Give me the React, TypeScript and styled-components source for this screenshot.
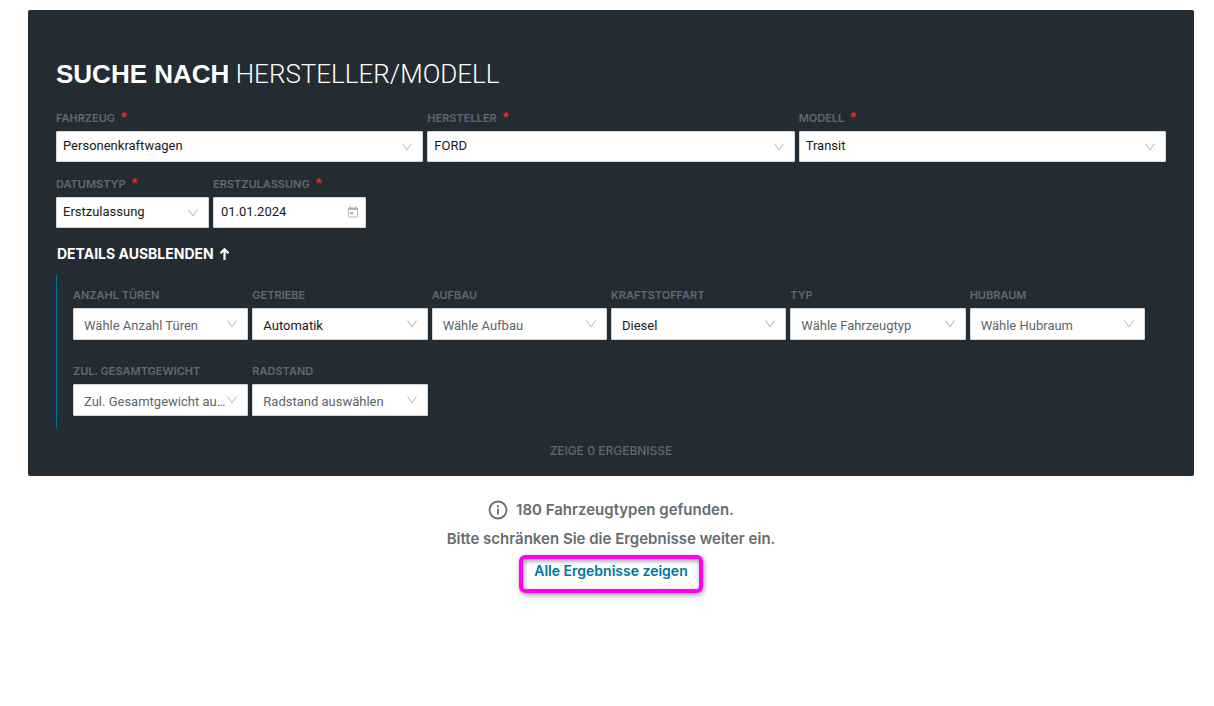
import React, { useId } from 'react';
import styled, { createGlobalStyle } from 'styled-components';

const GlobalStyle = createGlobalStyle`
  *, *::before, *::after { box-sizing: border-box; }
  body {
    margin: 0;
    background: #ffffff;
    font-family: Inter, "Liberation Sans", sans-serif;
    font-size: 13px;
    color: #1c2228;
  }
  button, input, select { font: inherit; margin: 0; }
`;

const Page = styled.main`
  padding: 10px 20px 24px 28px;
`;

const Panel = styled.form`
  background: #242c33;
  border-radius: 2px;
  padding: 44px 28px 15px;
`;

const Title = styled.h1`
  margin: 0 0 16px;
  font-family: Roboto, "Liberation Sans", sans-serif;
  font-size: 26px;
  line-height: 40px;
  font-weight: 300;
  color: #ffffff;
  text-transform: uppercase;
`;

const Strong = styled.strong`
  font-family: "Liberation Sans", Arial, sans-serif;
  font-weight: 700;
`;

const FieldRow = styled.div`
  display: grid;
  grid-template-columns: repeat(3, minmax(0, 1fr));
  gap: 4px;
  margin-bottom: 14px;
`;

const DateRow = styled.div`
  display: grid;
  grid-template-columns: repeat(2, 153px);
  gap: 4px;
`;

const FieldBox = styled.div`
  display: flex;
  flex-direction: column;
  min-width: 0;
`;

const Label = styled.label`
  margin-bottom: 5px;
  font-size: 11px;
  line-height: 16px;
  font-weight: 600;
  color: #5f696d;
  text-transform: uppercase;
  white-space: nowrap;
`;

const Required = styled.span`
  margin-left: 6px;
  font-family: "Liberation Sans", Arial, sans-serif;
  font-size: 15px;
  line-height: 12px;
  color: #d8302a;
`;

const Control = styled.div`
  position: relative;
  display: flex;
`;

const Select = styled.select<{ $roomy?: boolean; $muted?: boolean }>`
  appearance: none;
  width: 100%;
  height: ${(p) => (p.$roomy ? '32px' : '31px')};
  padding: ${(p) => (p.$roomy ? '2px 20px 0 10px' : '0 20px 2px 6px')};
  border: 1px solid #d5d8da;
  border-radius: 1px;
  background: #ffffff;
  font-family: Roboto, "Liberation Sans", sans-serif;
  color: ${(p) => (p.$muted ? '#5c6468' : '#15191d')};
  text-overflow: ellipsis;
  white-space: nowrap;
  overflow: hidden;
`;

const DateInput = styled.input`
  width: 100%;
  height: 31px;
  padding: 0 24px 2px 7px;
  border: 1px solid #d5d8da;
  border-radius: 1px;
  background: #ffffff;
  font-family: Roboto, "Liberation Sans", sans-serif;
  color: #15191d;
`;

const ControlIcon = styled.svg`
  position: absolute;
  right: 8px;
  top: 50%;
  width: 16px;
  height: 16px;
  margin-top: -8px;
  pointer-events: none;
`;

const DateIcon = styled(ControlIcon)`
  right: 5px;
`;

const Toggle = styled.button`
  display: flex;
  align-items: center;
  gap: 5px;
  margin: 16px 0 11px;
  padding: 0 1px;
  border: 0;
  background: none;
  font-size: 14px;
  line-height: 20px;
  font-weight: 700;
  color: #ffffff;
  text-transform: uppercase;
  cursor: pointer;
`;

const Details = styled.div`
  display: grid;
  grid-template-columns: repeat(6, minmax(0, 1fr));
  gap: 23px 4px;
  padding: 12px 21px 12px 16px;
  border-left: 1px solid #00739f;
`;

const Count = styled.p`
  margin: 13px 0 0;
  font-size: 12px;
  line-height: 20px;
  font-weight: 500;
  text-align: center;
  color: #5f696d;
  text-transform: uppercase;
`;

const Notice = styled.section`
  display: flex;
  flex-direction: column;
  align-items: center;
  padding-top: 19px;
  font-size: 15px;
  font-weight: 600;
  color: #666c70;
`;

const NoticeLine = styled.p`
  display: flex;
  align-items: center;
  gap: 8px;
  margin: 0;
  line-height: 29px;
`;

const ShowAll = styled.a`
  margin-top: 2px;
  padding: 1px 11px 7px;
  border: 4px solid #ff00f2;
  border-radius: 6px;
  box-shadow: 1px 2px 5px rgba(0, 0, 0, 0.4), inset 1px 2px 5px rgba(0, 0, 0, 0.4);
  font-size: 14px;
  line-height: 22px;
  color: #00739f;
  text-decoration: none;
`;

const Chevron = () => (
  <ControlIcon viewBox="0 0 16 16" fill="none" stroke="#bfc2c4" strokeWidth="1.1" aria-hidden="true">
    <path d="M3.500 4.500 8 10.800l4.500-6.300" />
  </ControlIcon>
);

const CalendarIcon = () => (
  <DateIcon viewBox="0 0 16 16" fill="none" aria-hidden="true">
    <rect x="3.500" y="3" width="9" height="9" rx="1" stroke="#b4b4b4" />
    <path d="M3 3h10v2H3zM4.500 1.500h1.500v2H4.500zM10 1.500h1.500v2H10z" fill="#b4b4b4" />
    <rect x="5" y="7" width="3" height="2.500" fill="#b4b4b4" />
  </DateIcon>
);

const ArrowUp = () => (
  <svg width="11" height="12" viewBox="0 0 11 12" fill="none" stroke="#ffffff" strokeWidth="2.200" aria-hidden="true">
    <path d="M5.500 12V1.500M1.500 5.300l4-4 4 4" />
  </svg>
);

const InfoIcon = () => (
  <svg width="20" height="20" viewBox="0 0 20 20" fill="none" aria-hidden="true">
    <circle cx="10" cy="10" r="8.500" stroke="#666c70" strokeWidth="1.800" />
    <path d="M10 8.500v6M10 5.300v1.900" stroke="#666c70" strokeWidth="1.800" />
  </svg>
);

type FieldProps = {
  label: string;
  value: string;
  required?: boolean;
  roomy?: boolean;
  muted?: boolean;
};

const SelectField = ({ label, value, required, roomy, muted }: FieldProps) => {
  const id = useId();
  return (
    <FieldBox>
      <Label htmlFor={id}>
        {label}
        {required && <Required>*</Required>}
      </Label>
      <Control>
        <Select id={id} $roomy={roomy} $muted={muted} required={required} defaultValue={value}>
          <option>{value}</option>
        </Select>
        <Chevron />
      </Control>
    </FieldBox>
  );
};

const DateField = ({ label, value }: FieldProps) => {
  const id = useId();
  return (
    <FieldBox>
      <Label htmlFor={id}>
        {label}
        <Required>*</Required>
      </Label>
      <Control>
        <DateInput id={id} type="text" required defaultValue={value} />
        <CalendarIcon />
      </Control>
    </FieldBox>
  );
};

const vehicleFields: FieldProps[] = [
  { label: 'Fahrzeug', value: 'Personenkraftwagen' },
  { label: 'Hersteller', value: 'FORD' },
  { label: 'Modell', value: 'Transit' },
];

const detailFields: FieldProps[] = [
  { label: 'Anzahl Türen', value: 'Wähle Anzahl Türen', muted: true },
  { label: 'Getriebe', value: 'Automatik' },
  { label: 'Aufbau', value: 'Wähle Aufbau', muted: true },
  { label: 'Kraftstoffart', value: 'Diesel' },
  { label: 'Typ', value: 'Wähle Fahrzeugtyp', muted: true },
  { label: 'Hubraum', value: 'Wähle Hubraum', muted: true },
  { label: 'Zul. Gesamtgewicht', value: 'Zul. Gesamtgewicht auswählen', muted: true },
  { label: 'Radstand', value: 'Radstand auswählen', muted: true },
];

export default function App() {
  return (
    <>
      <GlobalStyle />
      <Page>
        <Panel>
          <Title>
            <Strong>Suche nach</Strong> Hersteller/Modell
          </Title>
          <FieldRow>
            {vehicleFields.map((f) => (
              <SelectField key={f.label} {...f} required />
            ))}
          </FieldRow>
          <DateRow>
            <SelectField label="Datumstyp" value="Erstzulassung" required />
            <DateField label="Erstzulassung" value="01.01.2024" />
          </DateRow>
          <Toggle type="button" aria-expanded="true">
            Details ausblenden
            <ArrowUp />
          </Toggle>
          <Details>
            {detailFields.map((f) => (
              <SelectField key={f.label} {...f} roomy />
            ))}
          </Details>
          <Count>Zeige 0 Ergebnisse</Count>
        </Panel>
        <Notice>
          <NoticeLine>
            <InfoIcon />
            180 Fahrzeugtypen gefunden.
          </NoticeLine>
          <NoticeLine>Bitte schränken Sie die Ergebnisse weiter ein.</NoticeLine>
          <ShowAll href="#ergebnisse">Alle Ergebnisse zeigen</ShowAll>
        </Notice>
      </Page>
    </>
  );
}
